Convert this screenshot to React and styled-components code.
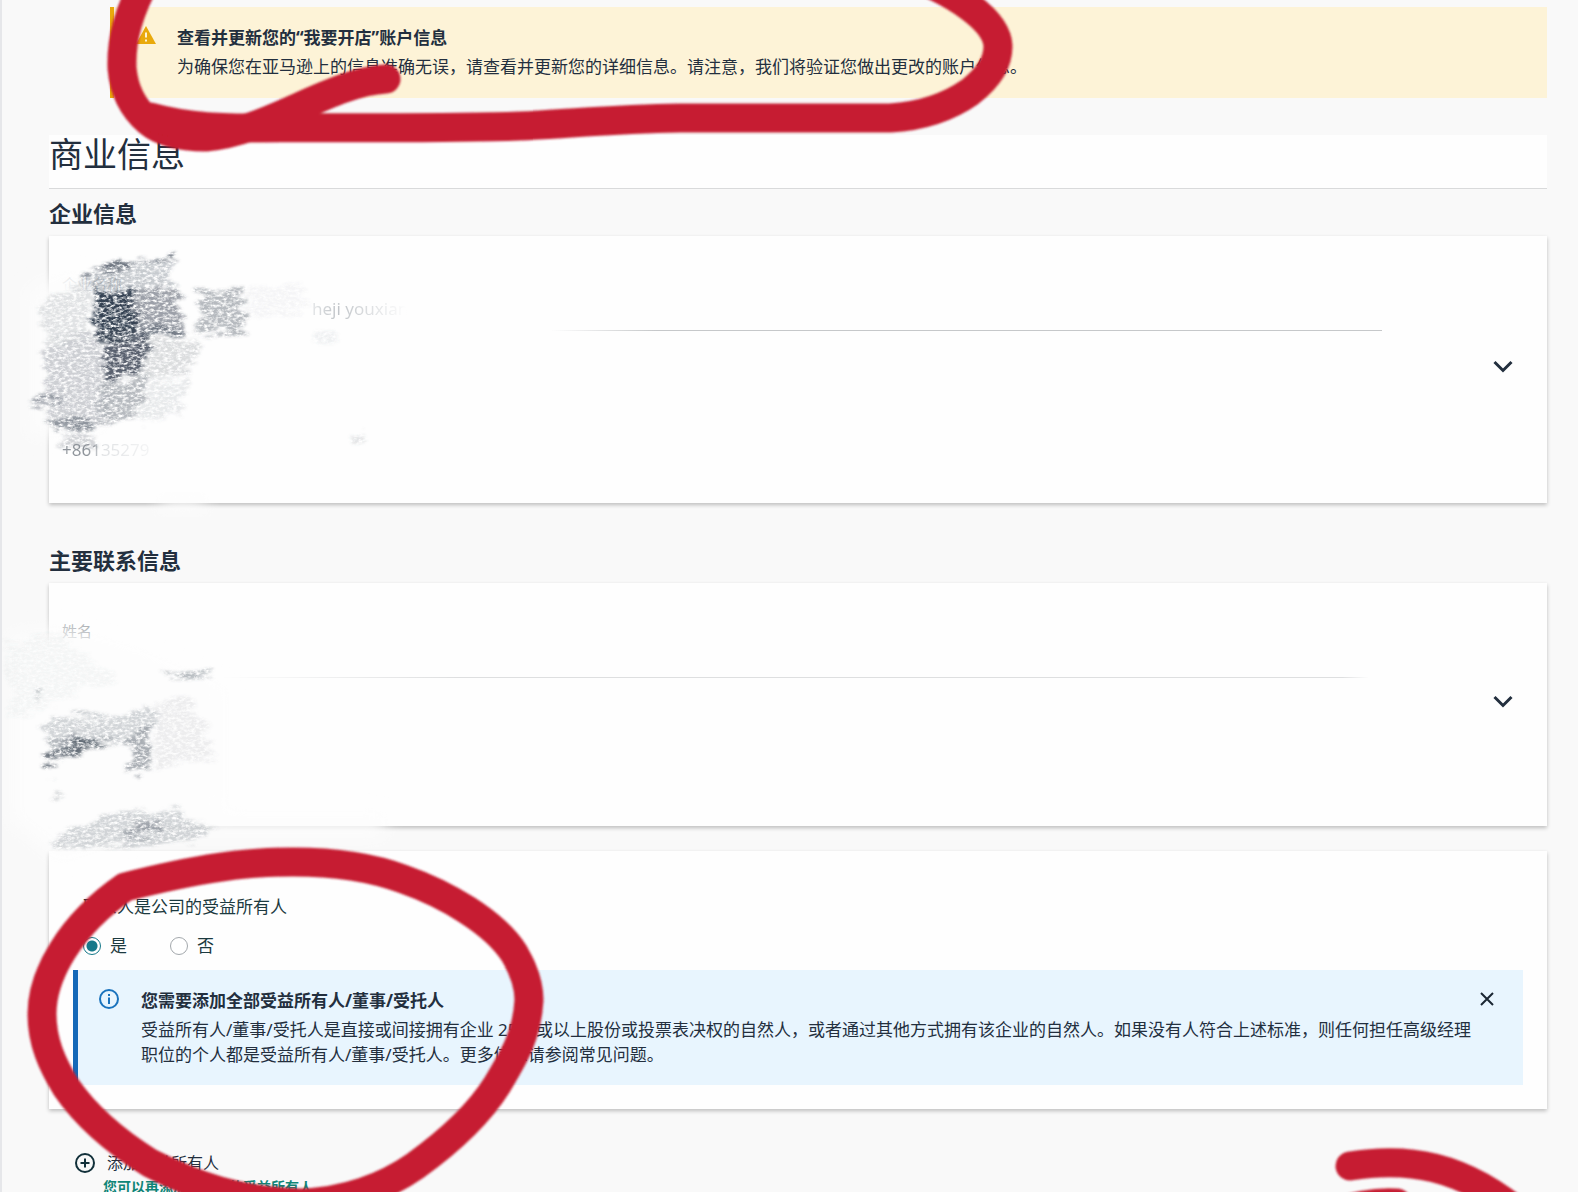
/**
 * App.jsx
 * Account information page: update notice, business details,
 * primary contact and the beneficial owner question.
 *
 * @public
 */

import React, { useState } from "react";
import styled, { createGlobalStyle } from "styled-components";

const App = () => {
  const [isOwner, setIsOwner] = useState("yes");
  const [showInfo, setShowInfo] = useState(true);

  return (
    <Page>
      <GlobalStyle />
      <Notice>
        <WarningIcon />
        <div>
          <NoticeTitle>查看并更新您的“我要开店”账户信息</NoticeTitle>
          <NoticeText>
            为确保您在亚马逊上的信息准确无误，请查看并更新您的详细信息。请注意，我们将验证您做出更改的账户信息。
          </NoticeText>
        </div>
      </Notice>

      <H1>商业信息</H1>

      <H2>企业信息</H2>
      <DetailCard>
        <Fields>
          <Field>
            <FieldLabel $faint>企业名称</FieldLabel>
            <FieldValue $indent="250px">heji youxian</FieldValue>
          </Field>
          <Divider $from="37%" $to="45%" $end="100%" />
          <Phone>+86135279</Phone>
        </Fields>
        <ExpandButton label="展开企业信息" />
      </DetailCard>

      <H2 $spaced>主要联系信息</H2>
      <DetailCard>
        <Fields>
          <Field>
            <FieldLabel>姓名</FieldLabel>
            <FieldValue />
          </Field>
          <Divider $from="12%" $to="30%" $end="97%" $light />
          <ContactSpace />
        </Fields>
        <ExpandButton label="展开主要联系信息" />
      </DetailCard>

      <OwnerCard>
        <Question>
          <legend>联系人是公司的受益所有人</legend>
          <Options>
            <Option>
              <Radio
                type="radio"
                name="owner"
                checked={isOwner === "yes"}
                onChange={() => setIsOwner("yes")}
              />
              是
            </Option>
            <Option>
              <Radio
                type="radio"
                name="owner"
                checked={isOwner === "no"}
                onChange={() => setIsOwner("no")}
              />
              否
            </Option>
          </Options>
        </Question>
        {showInfo && (
          <Info>
            <InfoIcon />
            <InfoBody>
              <NoticeTitle>您需要添加全部受益所有人/董事/受托人</NoticeTitle>
              <NoticeText>
                受益所有人/董事/受托人是直接或间接拥有企业 25% 或以上股份或投票表决权的自然人，或者通过其他方式拥有该企业的自然人。如果没有人符合上述标准，则任何担任高级经理职位的个人都是受益所有人/董事/受托人。更多信息请参阅常见问题。
              </NoticeText>
            </InfoBody>
            <CloseButton aria-label="关闭" onClick={() => setShowInfo(false)}>
              <svg width="16" height="16" viewBox="0 0 16 16">
                <path d="M2 2L14 14M14 2L2 14" stroke="#1b2733" strokeWidth="2" />
              </svg>
            </CloseButton>
          </Info>
        )}
      </OwnerCard>

      <AddButton>
        <svg width="22" height="22" viewBox="0 0 22 22" fill="none" stroke="#12303a" strokeWidth="2">
          <circle cx="11" cy="11" r="9" />
          <path d="M11 6.5V15.5M6.5 11H15.5" />
        </svg>
        添加受益所有人
      </AddButton>
      <AddHint>您可以再添加多位新的受益所有人</AddHint>

      <Markup />
    </Page>
  );
};

const WarningIcon = () => (
  <svg width="20" height="19" viewBox="0 0 20 19">
    <path d="M10 1L20 19H0Z" fill="#e9a90c" />
    <path d="M10 7.5V12.5M10 14.5V16.5" stroke="#fdf3d7" strokeWidth="2" />
  </svg>
);

const InfoIcon = () => (
  <svg width="20" height="20" viewBox="0 0 20 20" fill="none" stroke="#1a73bd" strokeWidth="2">
    <circle cx="10" cy="10" r="9" />
    <path d="M10 8.5V15M10 5V7" />
  </svg>
);

const ExpandButton = ({ label }) => (
  <Chevron aria-label={label}>
    <svg width="20" height="14" viewBox="0 0 20 14" fill="none">
      <path d="M1.5 2L10 10.5L18.5 2" stroke="#232f3e" strokeWidth="3" />
    </svg>
  </Chevron>
);

// Pencil smudges over the private details and the red marker strokes
const Markup = () => (
  <Overlay width="1578" height="1192" viewBox="0 0 1578 1192" fill="none" aria-hidden="true">
    <defs>
      <filter id="pencil" x="-10%" y="-10%" width="120%" height="120%">
        <feTurbulence type="fractalNoise" baseFrequency="0.22 0.4" numOctaves="4" seed="7" result="grain" />
        <feTurbulence type="fractalNoise" baseFrequency="0.03 0.16" numOctaves="3" seed="3" result="wave" />
        <feColorMatrix
          in="grain"
          type="matrix"
          values="0 0 0 0 0  0 0 0 0 0  0 0 0 0 0  0 0 0 2.6 -0.6"
          result="mask"
        />
        <feDisplacementMap in="SourceGraphic" in2="wave" scale="26" xChannelSelector="R" yChannelSelector="A" result="rough" />
        <feGaussianBlur in="rough" stdDeviation="1.6" result="soft" />
        <feComposite in="soft" in2="mask" operator="in" result="drawn" />
        <feGaussianBlur in="drawn" stdDeviation="0.5" />
      </filter>
      <filter id="haze" x="-30%" y="-30%" width="160%" height="160%">
        <feGaussianBlur stdDeviation="9" />
      </filter>
      <filter id="edge">
        <feGaussianBlur stdDeviation="1" />
      </filter>
    </defs>

    <g fill="#fdfdfd" filter="url(#haze)">
      <path d="M30 290L80 272L110 430L30 435Z" />
      <path d="M10 635L60 630L130 650L225 690L225 805L60 860L10 820Z" />
      <path d="M60 815H385V836H60Z" />
    </g>
    <path d="M160 497H205V512H160Z" fill="#fcfcfc" filter="url(#haze)" />

    <g filter="url(#pencil)" fill="#4a5462">
      <path d="M80 270L174 256L176 261L82 276Z" opacity="0.8" />
      <path d="M82 275L173 263L170 287L92 291Z" opacity="0.3" />
      <path d="M38 303L88 280L92 338L46 345Z" opacity="0.16" />
      <path d="M92 290L131 287L140 336L98 340Z" fill="#364252" />
      <path d="M130 288L178 290L187 331L138 338Z" opacity="0.55" />
      <path d="M98 332L187 327L187 333L100 340Z" opacity="0.5" />
      <path d="M201 289L243 288L243 333L197 337Z" opacity="0.4" />
      <path d="M106 340L148 336L144 372L108 383L101 367Z" fill="#3c4756" opacity="0.85" />
      <path d="M46 343L100 336L104 384L100 425L55 430L42 392Z" opacity="0.27" />
      <path d="M146 338L200 340L195 366L150 385L140 380Z" opacity="0.2" />
      <path d="M102 384L150 377L142 400L132 422L98 425Z" opacity="0.4" />
      <path d="M150 385L190 375L180 415L134 422Z" opacity="0.12" />
      <path d="M25 399L62 396L64 404L32 406Z" opacity="0.5" />
      <path d="M52 418L88 416L90 428L54 430Z" opacity="0.45" />
      <path d="M62 438L98 438L95 447L62 448Z" opacity="0.25" />
      <path d="M248 288L300 285L310 312L250 316Z" opacity="0.05" />
      <path d="M316 333L335 331L335 347L318 347Z" opacity="0.08" />
      <path d="M355 432H365V441H355Z" opacity="0.15" />
    </g>

    <g filter="url(#pencil)" fill="#56606b">
      <path d="M165 674L216 671L217 676L165 678Z" opacity="0.4" />
      <path d="M34 694L42 692L40 700L34 699Z" opacity="0.3" />
      <path d="M48 713L112 716L152 704L155 728L122 739L78 748L42 740Z" opacity="0.26" />
      <path d="M47 742L78 735L76 750L48 755Z" opacity="0.4" />
      <path d="M44 757L78 745L121 735L84 750L50 764Z" opacity="0.9" />
      <path d="M126 739L148 726L152 748L150 768L125 773L134 752Z" opacity="0.5" />
      <path d="M155 705L190 695L216 758L155 768Z" opacity="0.1" />
      <path d="M52 790L62 788L60 798L52 798Z" opacity="0.2" />
      <path d="M50 840L112 812L165 808L217 832L180 842L52 848Z" opacity="0.26" />
      <path d="M120 830L160 818L160 835L124 840Z" opacity="0.4" />
      <path d="M5 640L60 635L120 680L60 700L10 720Z" opacity="0.05" />
    </g>

    <g stroke="#c61f30" strokeWidth="29" strokeLinecap="round" strokeLinejoin="round" filter="url(#edge)">
      <path d="M148 -24C128 12 121 40 122 68C124 92 133 108 148 121C163 134 185 137 206 137C268 132 330 82 386 79" />
      <path d="M150 117C190 128 225 128 260 128C350 127 440 129 520 126C570 124 610 119 680 118L890 118C925 116 950 106 970 92C990 76 998 62 998 46C997 22 960 -8 890 -32" />
      <path d="M125 887C200 868 245 862 293 862C330 862 368 866 403 879C446 894 494 922 514 953C524 970 529 985 529 1000C527 1035 515 1055 497 1085C475 1120 440 1148 415 1166C385 1187 345 1202 300 1203C240 1201 195 1186 150 1163C118 1143 88 1119 66 1087C52 1064 42 1042 42 1014C42 975 70 925 125 887Z" />
      <path d="M1350 1166C1405 1157 1462 1163 1525 1218" />
      <path d="M1335 1213Q1368 1201 1397 1203" />
    </g>
  </Overlay>
);

const GlobalStyle = createGlobalStyle`
  * {
    box-sizing: border-box;
  }

  body {
    margin: 0;
    background: #f9f9f9;
    color: #232f3e;
    font-family: "Noto Sans", "Noto Sans CJK SC", sans-serif;
    font-size: 17px;
    line-height: 25px;
  }

  button {
    padding: 0;
    border: none;
    background: none;
    color: inherit;
    font: inherit;
    cursor: pointer;
  }
`;

const Page = styled.main`
  position: relative;
  height: 100vh;
  padding: 7px 31px 0 47px;
  border-left: 2px solid #e6e7ea;
  overflow: hidden;
`;

const Notice = styled.section`
  display: flex;
  gap: 21px;
  margin-left: 61px;
  padding: 18px 22px 19px;
  border-left: 4px solid #e9a90c;
  background: #fdf3d7;

  svg {
    flex: none;
  }
`;

const NoticeTitle = styled.h3`
  margin: 0;
  font-size: 17px;
  font-weight: 700;
`;

const NoticeText = styled.p`
  margin: 4px 0 0;
`;

const H1 = styled.h1`
  margin: 37px 0 11px;
  padding-bottom: 15px;
  border-bottom: 1px solid #d9dadb;
  background: #fefefe;
  font-size: 34px;
  font-weight: 400;
  line-height: 38px;
`;

const H2 = styled.h2`
  margin: ${(props) => (props.$spaced ? "44px" : "0")} 0 9px;
  font-size: 22px;
  font-weight: 700;
  line-height: 27px;
`;

const Card = styled.section`
  background: #fefefe;
  box-shadow: 0 2px 4px rgba(0, 0, 0, 0.24);
`;

const DetailCard = styled(Card)`
  display: flex;
  align-items: center;
  padding: 36px 24px 41px 13px;
`;

const Fields = styled.div`
  flex: 1;
  margin-right: 101px;
`;

const Field = styled.div`
  padding-bottom: 7px;
`;

const FieldLabel = styled.div`
  color: ${(props) => (props.$faint ? "#d4d7da" : "#a9adb1")};
  font-size: 15px;
  line-height: 24px;
`;

const FieldValue = styled.div`
  min-height: 27px;
  padding-left: ${(props) => props.$indent || "0"};
  background: linear-gradient(to right, #e4e6e8 250px, #c0c4c8 275px, #fefefe 345px);
  background-clip: text;
  color: transparent;
  line-height: 25px;
`;

const Divider = styled.hr`
  height: 1px;
  margin: 0;
  border: none;
  background: linear-gradient(
    to right,
    transparent ${(props) => props.$from},
    ${(props) => (props.$light ? "#dedfe0" : "#c6c8ca")} ${(props) => props.$to},
    ${(props) => (props.$light ? "#dedfe0" : "#c6c8ca")} ${(props) => props.$end},
    transparent 99%
  );
`;

const Phone = styled.div`
  padding-top: 107px;
  background: linear-gradient(to right, #8f959b 25px, #e0e2e4 42px, #fefefe 110px);
  background-clip: text;
  color: transparent;
  line-height: 24px;
`;

const ContactSpace = styled.div`
  height: 107px;
`;

const Chevron = styled.button`
  display: flex;
  align-items: center;
  justify-content: center;
  width: 40px;
  height: 40px;
`;

const OwnerCard = styled(Card)`
  margin-top: 25px;
  padding: 43px 24px 24px;
`;

const Question = styled.fieldset`
  margin: 0;
  padding: 0 10px;
  border: none;
  color: #1c3a40;

  legend {
    padding: 0;
  }
`;

const Options = styled.div`
  display: flex;
  gap: 43px;
  padding: 15px 0 12px;
`;

const Option = styled.label`
  display: flex;
  align-items: center;
  gap: 9px;
  line-height: 24px;
`;

const Radio = styled.input`
  appearance: none;
  width: 18px;
  height: 18px;
  margin: 0;
  border: 1px solid #a3a8ac;
  border-radius: 50%;
  background: #fff;

  &:checked {
    border-color: #16798a;
    background: radial-gradient(#16798a 5px, #fff 6px);
  }
`;

const Info = styled.aside`
  display: flex;
  align-items: flex-start;
  padding: 18px 28px 18px 21px;
  border-left: 5px solid #1569b8;
  background: #e8f5fe;

  > svg {
    flex: none;
    margin-top: 1px;
  }
`;

const InfoBody = styled.div`
  flex: 1;
  margin-left: 22px;
`;

const CloseButton = styled.button`
  display: flex;
  align-items: center;
  height: 22px;
`;

const AddButton = styled.button`
  display: flex;
  align-items: center;
  gap: 11px;
  margin: 42px 0 0 25px;
  font-size: 16px;
  line-height: 24px;
`;

const AddHint = styled.p`
  margin: 2px 0 0 54px;
  color: #0f8577;
  font-size: 14px;
  font-weight: 700;
  line-height: 20px;
`;

const Overlay = styled.svg`
  position: absolute;
  top: 0;
  left: -2px;
  pointer-events: none;
`;

export default App;
